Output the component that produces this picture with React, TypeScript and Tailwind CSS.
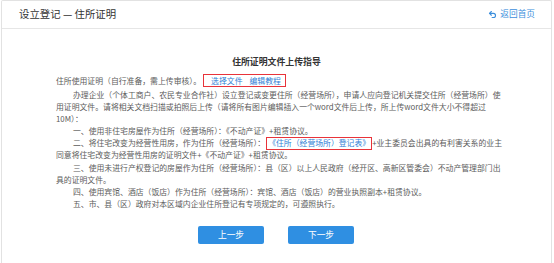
import React from "react";
import { Undo2 } from "lucide-react";

const font = { fontFamily: '"Noto Sans CJK SC", "Noto Sans", sans-serif' };

export default function App() {
  return (
    <div className="w-[554px] h-[263px] bg-white overflow-hidden" style={font}>
      <div className="ml-[1px] w-[551px] h-[263px] border-x border-t border-[#e2e2e2] rounded-t-[2px]">
        <div className="h-[28px] border-b border-[#e6e6e6] flex items-center justify-between pl-[17px] pr-[16px]">
          <span className="text-[10.4px] text-[#333] leading-none">设立登记 — 住所证明</span>
          <span className="flex items-center gap-[3px] text-[8.7px] text-[#3d8fdc] leading-none">
            <Undo2 size={9} strokeWidth={3} />
            返回首页
          </span>
        </div>
        <div className="pt-[27px] text-[7.85px] text-[#5c5c5c]">
          <div className="h-[12px] leading-[12px] text-center text-[8.9px] font-bold text-[#333]">住所证明文件上传指导</div>
          <div className="mt-[6px] pl-[54px] h-[13px] flex items-center whitespace-nowrap">
            <span>住所使用证明（自行准备，需上传审核）。</span>
            <span className="ml-[2px] h-[13px] border border-[#e8333a] flex items-center pl-[7px] pr-[4px] gap-[7px] text-[#2f7fd6]">
              <span>选择文件</span>
              <span>编辑教程</span>
            </span>
          </div>
          <div className="mt-[2px] pl-[54px] leading-[12.1px] whitespace-nowrap">
            <div className="pl-[17px]">办理企业（个体工商户、农民专业合作社）设立登记或变更住所（经营场所），申请人应向登记机关提交住所（经营场所）使</div>
            <div>用证明文件。请将相关文档扫描或拍照后上传（请将所有图片编辑插入一个word文件后上传，所上传word文件大小不得超过</div>
            <div>10M）：</div>
            <div className="pl-[17px]">一、使用非住宅房屋作为住所（经营场所）：《不动产证》+租赁协议。</div>
            <div className="pl-[17px] flex items-center h-[12.1px]">
              <span>二、将住宅改变为经营性用房，作为住所（经营场所）：</span>
              <span className="ml-[1px] h-[13px] border border-[#e8333a] flex items-center pl-[1px] pr-[1px] text-[#2f7fd6]">《住所（经营场所）登记表》</span>
              <span>+业主委员会出具的有利害关系的业主</span>
            </div>
            <div>同意将住宅改变为经营性用房的证明文件+《不动产证》+租赁协议。</div>
            <div className="pl-[17px]">三、使用未进行产权登记的房屋作为住所（经营场所）：县（区）以上人民政府（经开区、高新区管委会）不动产管理部门出</div>
            <div>具的证明文件。</div>
            <div className="pl-[17px]">四、使用宾馆、酒店（饭店）作为住所（经营场所）：宾馆、酒店（饭店）的营业执照副本+租赁协议。</div>
            <div className="pl-[17px]">五、市、县（区）政府对本区域内企业住所登记有专项规定的，可遵照执行。</div>
          </div>
          <div className="mt-[16px] flex justify-center gap-[24px] pr-[1px]">
            <button className="w-[66px] h-[18px] rounded-[2px] bg-[#2f8fe2] text-white text-[8.7px] leading-none">上一步</button>
            <button className="w-[66px] h-[18px] rounded-[2px] bg-[#2f8fe2] text-white text-[8.7px] leading-none">下一步</button>
          </div>
        </div>
      </div>
    </div>
  );
}
